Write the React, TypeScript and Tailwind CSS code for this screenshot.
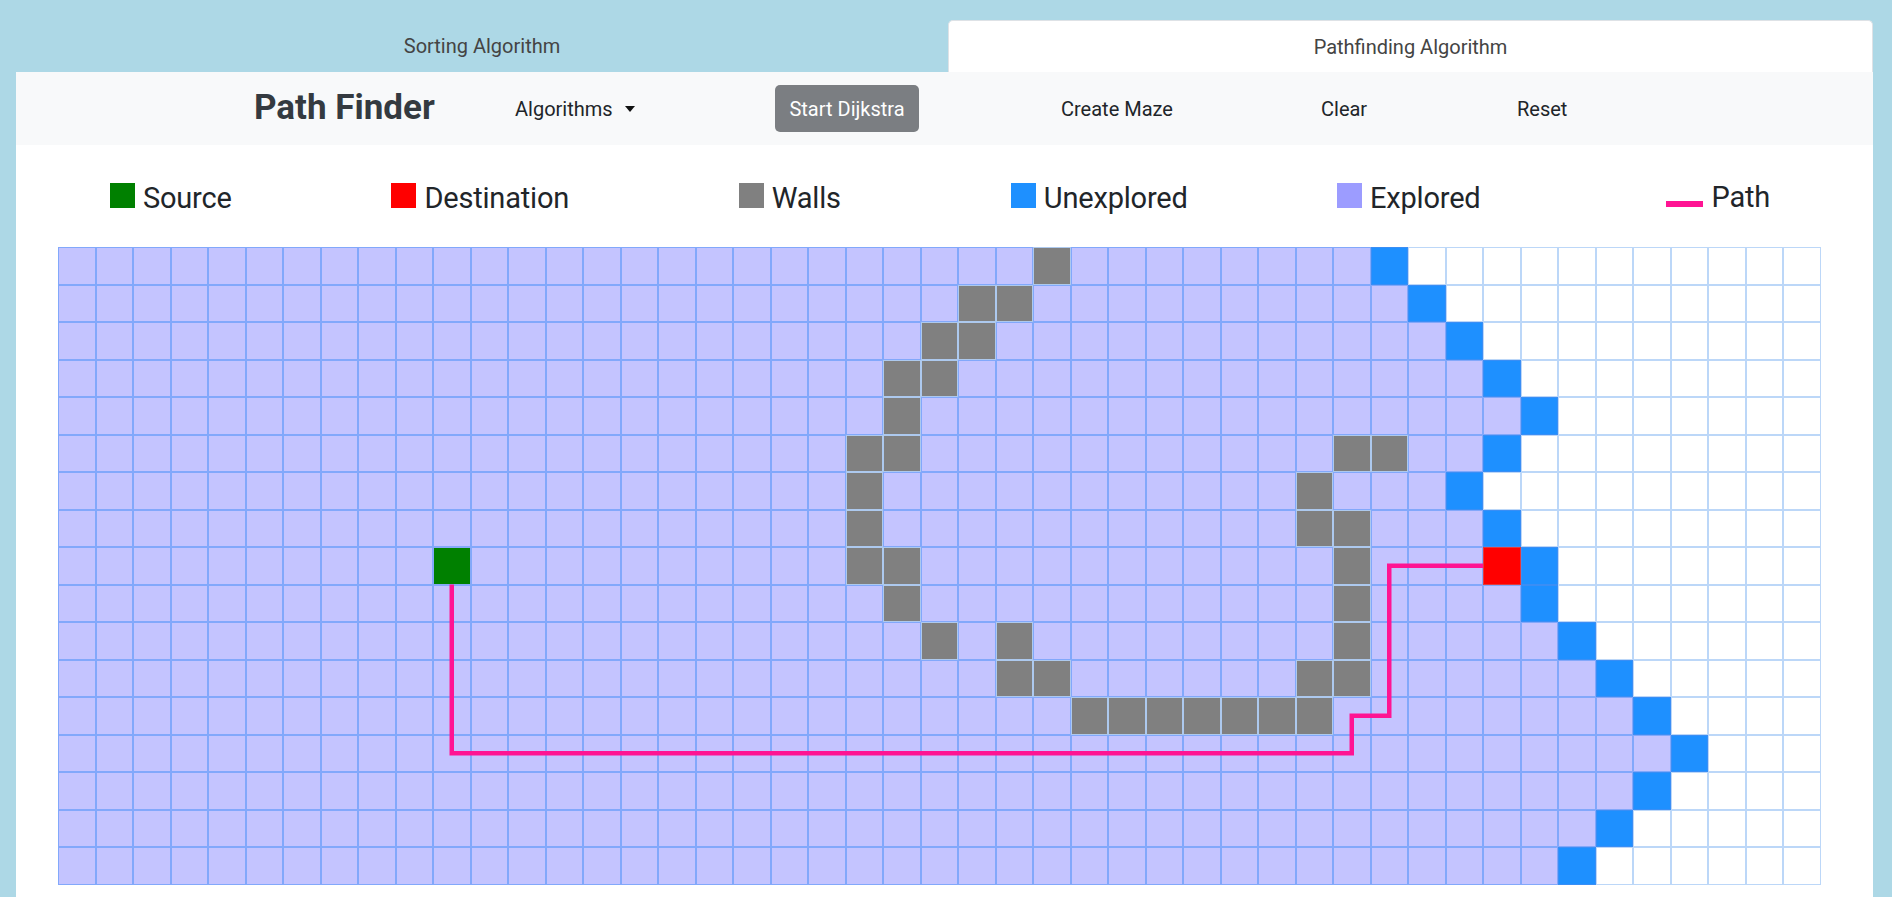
import React from 'react';

const COLS = 47;
const ROWS = 17;
const CELL = 37.5;

const SOURCE = { r: 8, c: 10 };
const TARGET = { r: 8, c: 38 };

// column of the blue frontier cell in every row, explored to the left of it
const frontier = [35, 36, 37, 38, 39, 38, 37, 38, 39, 39, 40, 41, 42, 43, 42, 41, 40];

const walls: Record<number, number[]> = {
  0: [26],
  1: [24, 25],
  2: [23, 24],
  3: [22, 23],
  4: [22],
  5: [21, 22, 34, 35],
  6: [21, 33],
  7: [21, 33, 34],
  8: [21, 22, 34],
  9: [22, 34],
  10: [23, 25, 34],
  11: [25, 26, 33, 34],
  12: [27, 28, 29, 30, 31, 32, 33],
};

type Kind = 'source' | 'target' | 'wall' | 'frontier' | 'explored' | 'empty';

const kindOf = (r: number, c: number): Kind => {
  if (r === SOURCE.r && c === SOURCE.c) return 'source';
  if (r === TARGET.r && c === TARGET.c) return 'target';
  if (walls[r] && walls[r].includes(c)) return 'wall';
  if (frontier[r] === c) return 'frontier';
  if (c < frontier[r]) return 'explored';
  return 'empty';
};

const cellClass: Record<Kind, string> = {
  source: 'bg-[#008000] border-[#86a9f6]',
  target: 'bg-[#ff0000] border-[#e33a3a]',
  wall: 'bg-[#808080] border-[#adc9ee]',
  frontier: 'bg-[#1e90ff] border-[#3a8ef5]',
  explored: 'bg-[#c4c4ff] border-[#82a8fb]',
  empty: 'bg-white border-[#bcd7f8]',
};

// path through cell centres, from the source's lower edge to the target's left edge
const pathPoints = [
  [10.5, 9],
  [10.5, 13.5],
  [34.5, 13.5],
  [34.5, 12.5],
  [35.5, 12.5],
  [35.5, 8.5],
  [38, 8.5],
]
  .map(([c, r]) => `${c * CELL},${r * CELL}`)
  .join(' ');

const legend = [
  { label: 'Source', swatch: 'h-[25px] w-[25px] bg-[#008000]' },
  { label: 'Destination', swatch: 'h-[25px] w-[25px] bg-[#ff0000]' },
  { label: 'Walls', swatch: 'h-[25px] w-[25px] bg-[#808080]' },
  { label: 'Unexplored', swatch: 'h-[25px] w-[25px] bg-[#1e90ff]' },
  { label: 'Explored', swatch: 'h-[25px] w-[25px] bg-[#9c9cff]' },
  { label: 'Path', swatch: 'h-[6px] w-[37px] bg-[#ff1493]' },
];

const Grid = () => {
  const cells = [];
  for (let r = 0; r < ROWS; r++) {
    for (let c = 0; c < COLS; c++) {
      const kind = kindOf(r, c);
      cells.push(
        <div key={`${r}-${c}`} className={`box-border border ${cellClass[kind]}`} />
      );
    }
  }

  return (
    <div className="relative w-[1762.5px]">
      <div className="grid grid-cols-[repeat(47,37.5px)] auto-rows-[37.5px]">{cells}</div>
      <svg
        className="pointer-events-none absolute left-0 top-0"
        width={COLS * CELL}
        height={ROWS * CELL}
      >
        <polyline
          points={pathPoints}
          fill="none"
          stroke="#ff1493"
          strokeWidth={4.5}
          strokeLinejoin="miter"
        />
      </svg>
    </div>
  );
};

export default function App() {
  return (
    <div className="min-h-screen bg-[#add8e6] pl-[16px] pr-[19px] pt-[20px] font-[Roboto,sans-serif]">
      {/* tabs */}
      <div className="flex h-[52px] text-[20px] text-[#444]">
        <div className="flex w-[932px] items-center justify-center">Sorting Algorithm</div>
        <div className="flex flex-1 items-center justify-center rounded-t-[5px] border border-b-0 border-[#dee2e6] bg-white">
          Pathfinding Algorithm
        </div>
      </div>

      <div className="bg-white pb-[12px]">
        {/* navbar */}
        <nav className="flex h-[73px] items-center bg-[#f8f9fa] pl-[238px] text-[20px] text-[#212529]">
          <div className="w-[261px] text-[35px] font-bold text-[#343a40]">Path Finder</div>
          <div className="flex w-[260px] items-center">
            Algorithms
            <span className="ml-[12px] mt-[1px] h-0 w-0 border-x-[5px] border-t-[6px] border-x-transparent border-t-[#111]" />
          </div>
          <button className="flex h-[47px] w-[144px] items-center justify-center rounded-[5px] bg-[#7b7e82] text-white">
            Start Dijkstra
          </button>
          <div className="ml-[142px] w-[260px]">Create Maze</div>
          <div className="w-[196px]">Clear</div>
          <div>Reset</div>
        </nav>

        {/* legend */}
        <div className="grid h-[102px] grid-cols-6 items-center pt-[3px] text-[29px] tracking-[-0.2px] text-[#212529]">
          {legend.map((item) => (
            <div key={item.label} className="flex items-baseline justify-center">
              <div className={item.swatch} />
              <span className="ml-[8px] leading-none">{item.label}</span>
            </div>
          ))}
        </div>

        {/* board */}
        <div className="pl-[42px]">
          <Grid />
        </div>
      </div>
    </div>
  );
}
